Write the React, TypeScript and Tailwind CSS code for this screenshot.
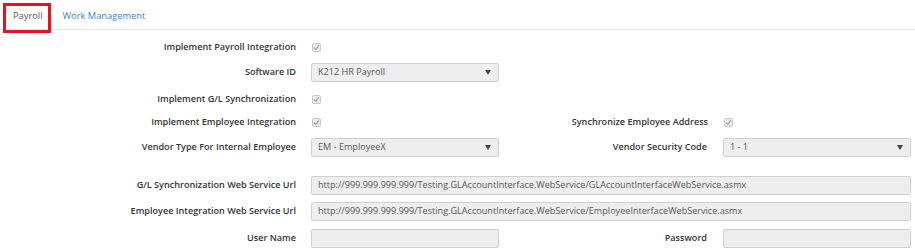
import React from "react";

const Check = () => (
  <div className="ml-[1px] flex h-[9px] w-[9px] items-center justify-center rounded-[2px] border border-[#c8c8c8] bg-[#ececec]">
    <svg width="7" height="7" viewBox="0 0 8 8">
      <path d="M1.2 4.2 L3.2 6.2 L6.8 1.6" fill="none" stroke="#a0a0a0" strokeWidth="1.4" />
    </svg>
  </div>
);

const Select = ({ value, w }: { value: string; w: string }) => (
  <div className={`flex h-[19px] ${w} items-center justify-between rounded-[2px] border border-[#cfcfcf] bg-[#eeeeee] pl-[6px] pr-[7px] text-[9.1px] text-[#555]`}>
    <span>{value}</span>
    <svg width="6" height="5" viewBox="0 0 6 5">
      <path d="M0 0 H6 L3 5 Z" fill="#444" />
    </svg>
  </div>
);

const Input = ({ value, w }: { value?: string; w: string }) => (
  <div className={`flex h-[19px] ${w} items-center rounded-[2px] border border-[#cfcfcf] bg-[#eeeeee] pl-[6px] text-[9.1px] text-[#555] whitespace-nowrap overflow-hidden`}>
    {value}
  </div>
);

const Label = ({ children, w }: { children: React.ReactNode; w: string }) => (
  <div className={`${w} shrink-0 text-right text-[9.1px] font-semibold text-[#333] whitespace-nowrap`}>{children}</div>
);

export default function App() {
  return (
    <div className="h-[251px] w-[915px] bg-white" style={{ fontFamily: '"Open Sans", "Noto Sans", sans-serif' }}>
      <div className="relative flex h-[30px] items-end border-b border-[#e5e5e5]">
        <div className="absolute left-[3px] top-[3px] h-[30px] w-[48px] border-[3px] border-[#e3141f]" />
        <div className="ml-[13px] pb-[6px] text-[9.3px] text-[#555]">Payroll</div>
        <div className="ml-[20px] pb-[6px] text-[9.3px] text-[#3f7ec0]">Work Management</div>
      </div>

      <div className="flex flex-col">
        <div className="mt-[7px] flex h-[20px] items-center">
          <Label w="w-[296px]">Implement Payroll Integration</Label>
          <div className="ml-[15px]"><Check /></div>
        </div>
        <div className="mt-[5px] flex h-[20px] items-center">
          <Label w="w-[296px]">Software ID</Label>
          <div className="ml-[15px]"><Select value="K212 HR Payroll" w="w-[188px]" /></div>
        </div>
        <div className="mt-[7px] flex h-[20px] items-center">
          <Label w="w-[296px]">Implement G/L Synchronization</Label>
          <div className="ml-[15px]"><Check /></div>
        </div>
        <div className="mt-[3px] flex h-[20px] items-center">
          <Label w="w-[296px]">Implement Employee Integration</Label>
          <div className="ml-[15px] w-[188px]"><Check /></div>
          <Label w="w-[209px]">Synchronize Employee Address</Label>
          <div className="ml-[15px]"><Check /></div>
        </div>
        <div className="mt-[5px] flex h-[20px] items-center">
          <Label w="w-[296px]">Vendor Type For Internal Employee</Label>
          <div className="ml-[15px] w-[188px]"><Select value="EM - EmployeeX" w="w-[188px]" /></div>
          <Label w="w-[208px]">Vendor Security Code</Label>
          <div className="ml-[16px]"><Select value="1 - 1" w="w-[188px]" /></div>
        </div>
        <div className="mt-[18px] flex h-[20px] items-center">
          <Label w="w-[296px]">G/L Synchronization Web Service Url</Label>
          <div className="ml-[15px]">
            <Input value="http://999.999.999.999/Testing.GLAccountInterface.WebService/GLAccountInterfaceWebService.asmx" w="w-[600px]" />
          </div>
        </div>
        <div className="mt-[6px] flex h-[20px] items-center">
          <Label w="w-[296px]">Employee Integration Web Service Url</Label>
          <div className="ml-[15px]">
            <Input value="http://999.999.999.999/Testing.GLAccountInterface.WebService/EmployeeInterfaceWebService.asmx" w="w-[600px]" />
          </div>
        </div>
        <div className="mt-[7px] flex h-[20px] items-center">
          <Label w="w-[296px]">User Name</Label>
          <div className="ml-[15px] w-[188px]"><Input w="w-[188px]" /></div>
          <Label w="w-[208px]">Password</Label>
          <div className="ml-[16px]"><Input w="w-[188px]" /></div>
        </div>
      </div>
    </div>
  );
}
